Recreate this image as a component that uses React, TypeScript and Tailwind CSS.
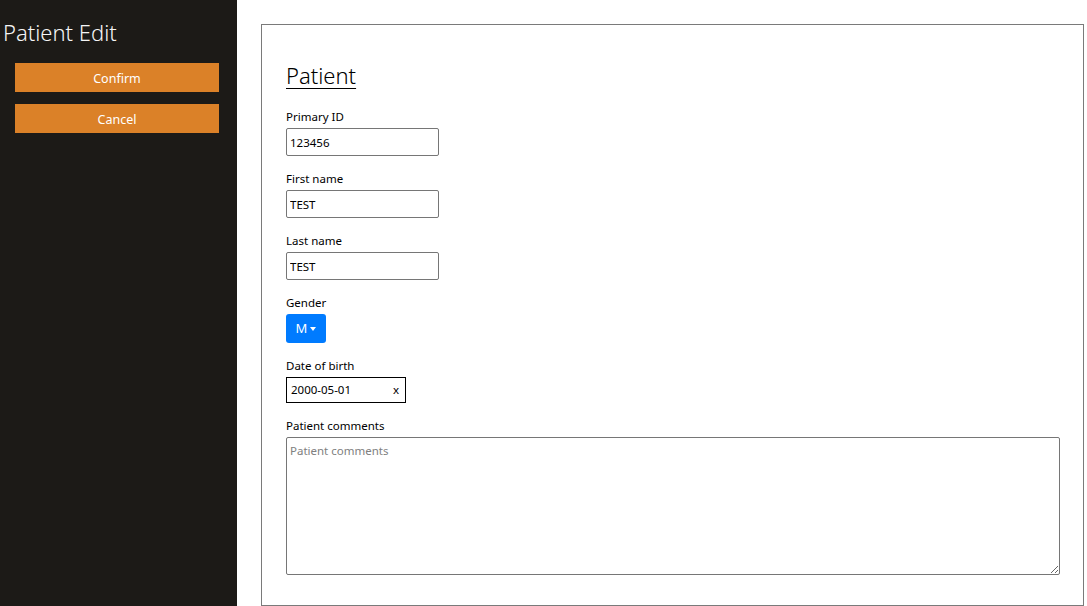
import React from "react";

const Field = ({ label, value }: { label: string; value: string }) => (
  <div className="flex flex-col">
    <label className="text-[11.5px] leading-[16px] text-black mb-[3px]">{label}</label>
    <input
      readOnly
      value={value}
      className="w-[153px] h-[28px] border border-[#767676] rounded-[2px] px-[3px] text-[11.5px] text-black outline-none bg-white"
    />
  </div>
);

export default function App() {
  return (
    <div className="flex w-[1087px] h-[606px] bg-white overflow-hidden" style={{ fontFamily: '"Noto Sans", "Open Sans", sans-serif' }}>
      <aside className="w-[237px] shrink-0 bg-[#1c1a17] flex flex-col">
        <h1 className="text-[#f5f5f5] text-[22px] font-light leading-[30px] mt-[17px] ml-[3px]">Patient Edit</h1>
        <div className="flex flex-col gap-[12px] px-[15px] mt-[16px] w-[234px]">
          <button className="h-[29px] bg-[#db8128] text-white text-[12.5px] pt-[3px]">Confirm</button>
          <button className="h-[29px] bg-[#db8128] text-white text-[12.5px] pt-[3px]">Cancel</button>
        </div>
      </aside>
      <main className="flex-1 pt-[24px] pl-[24px] pr-[3px] pb-0">
        <div className="h-[582px] border border-[#7a7a7a] pl-[24px] pr-[23px] pt-[35px] flex flex-col">
          <h2 className="text-[22px] font-light leading-[30px] underline underline-offset-[4px] decoration-1 text-black mb-[19px] w-fit">Patient</h2>
          <div className="flex flex-col gap-[15px]">
            <Field label="Primary ID" value="123456" />
            <Field label="First name" value="TEST" />
            <Field label="Last name" value="TEST" />
            <div className="flex flex-col">
              <label className="text-[11.5px] leading-[16px] text-black mb-[3px]">Gender</label>
              <button className="w-[40px] h-[29px] bg-[#007bff] rounded-[3px] text-white text-[13px] flex items-center justify-center gap-[3px]">
                M
                <span className="inline-block w-0 h-0 border-l-[3.5px] border-r-[3.5px] border-t-[4px] border-l-transparent border-r-transparent border-t-white mt-[1px]" />
              </button>
            </div>
            <div className="flex flex-col">
              <label className="text-[11.5px] leading-[16px] text-black mb-[3px]">Date of birth</label>
              <div className="w-[120px] h-[26px] border border-black flex items-center justify-between px-[4px] text-[11.5px] text-black">
                <span>2000-05-01</span>
                <span className="mr-[2px]">x</span>
              </div>
            </div>
            <div className="flex flex-col">
              <label className="text-[11.5px] leading-[16px] text-black mb-[3px]">Patient comments</label>
              <textarea
                placeholder="Patient comments"
                className="w-[774px] h-[138px] border border-[#767676] rounded-[2px] px-[3px] py-[4px] text-[11.5px] text-black placeholder:text-[#808080] outline-none resize-y"
              />
            </div>
          </div>
        </div>
      </main>
    </div>
  );
}
